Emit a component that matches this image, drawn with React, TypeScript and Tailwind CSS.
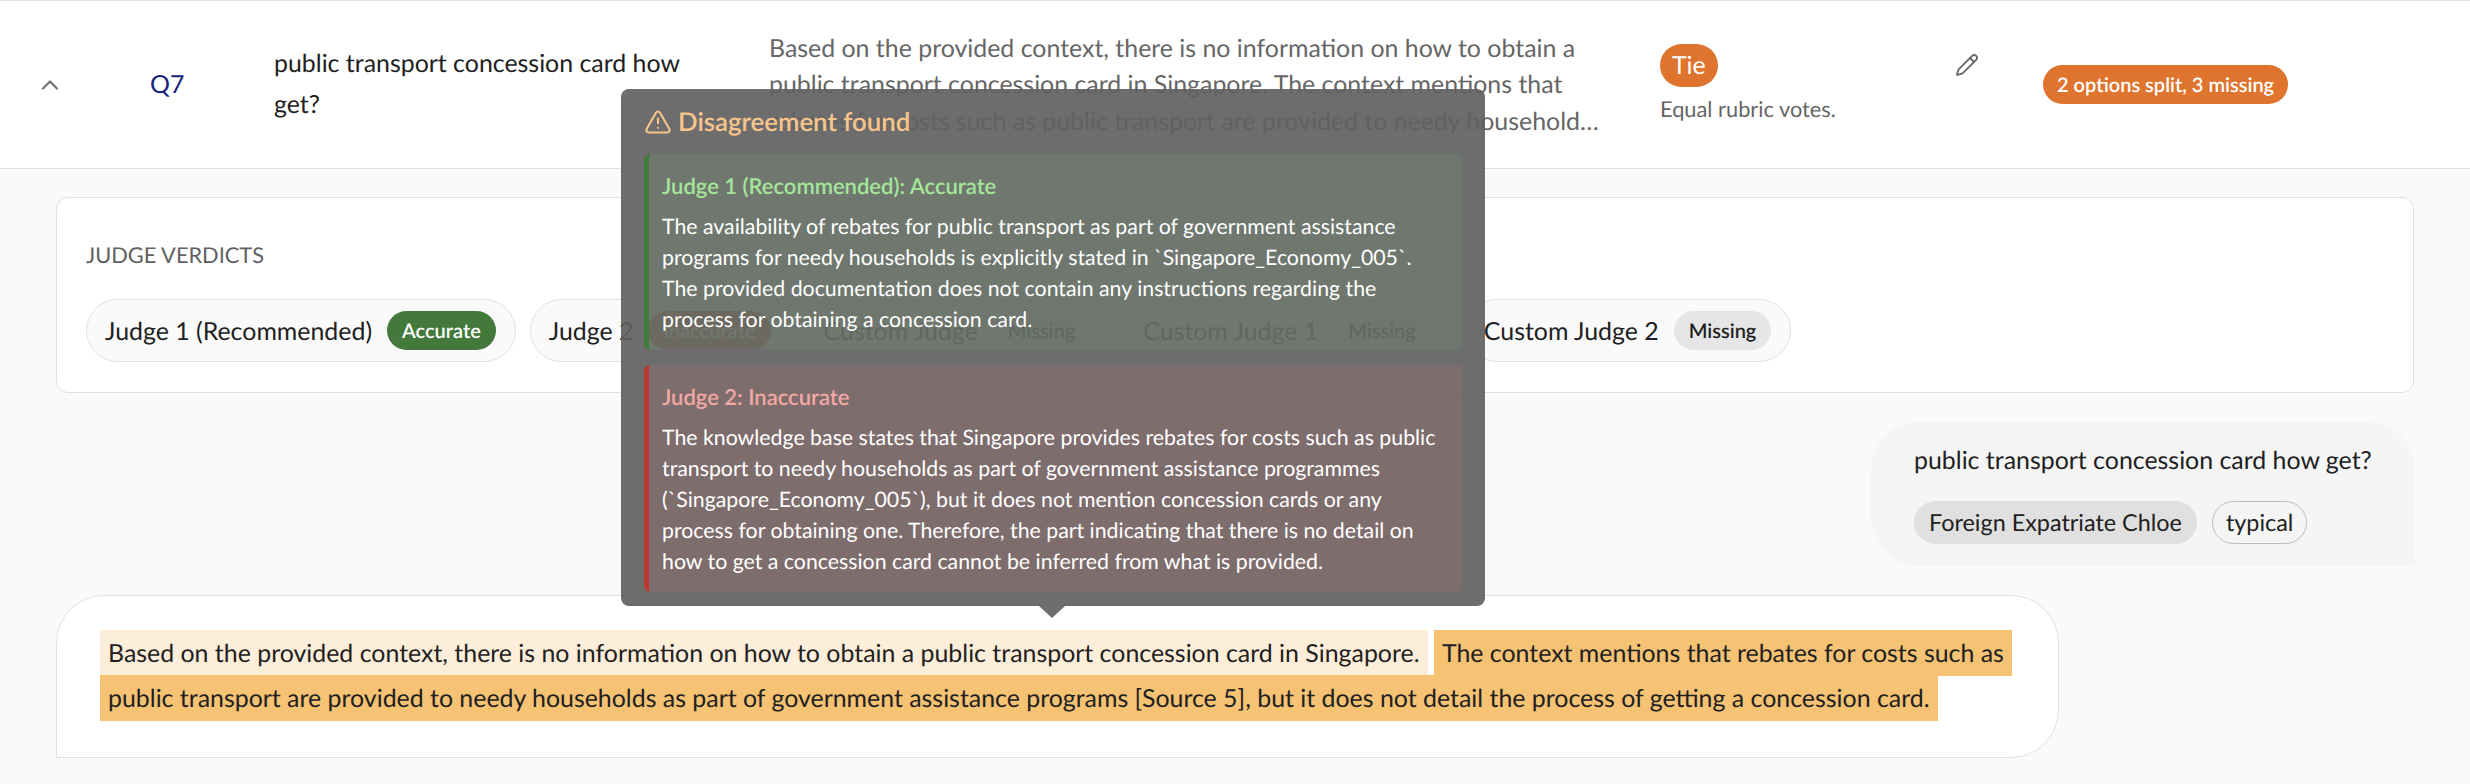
import { ChevronUp, Pencil, TriangleAlert } from 'lucide-react'

const judges = [
  { name: 'Judge 1 (Recommended)', verdict: 'Accurate', badge: 'bg-[#437a3c] text-white' },
  { name: 'Judge 2', verdict: 'Inaccurate', badge: 'bg-[#c0392b] text-white' },
  { name: 'Custom Judge', verdict: 'Missing', badge: 'bg-[#e6e6e6] text-[#1f1f1f]' },
  { name: 'Custom Judge 1', verdict: 'Missing', badge: 'bg-[#e6e6e6] text-[#1f1f1f]' },
  { name: 'Custom Judge 2', verdict: 'Missing', badge: 'bg-[#e6e6e6] text-[#1f1f1f]' },
]

export default function App() {
  return (
    <div className="relative w-[2470px] h-[784px] overflow-hidden bg-[#fafafa] font-['Lato',sans-serif] text-[24.9px] text-[#212121] [text-rendering:geometricPrecision]">
      {/* Summary row */}
      <div className="grid grid-cols-[100px_174px_495px_891px_383px_1fr] items-center h-[169px] bg-white border-y border-[#e0e0e0]">
        <div className="flex justify-center text-[#757575]">
          <ChevronUp className="w-[28px] h-[28px]" strokeWidth={2} />
        </div>
        <div className="pl-[50px] text-[#1a237e]">Q7</div>
        <div className="pr-[50px] leading-[41px] mt-[-2px]">public transport concession card how get?</div>
        <div className="pr-[55px] leading-[36.5px] text-[#666666] line-clamp-3">
          Based on the provided context, there is no information on how to obtain a public transport concession card in
          Singapore. The context mentions that rebates for costs such as public transport are provided to needy
          households as part of government assistance programs
        </div>
        <div className="flex items-start justify-between pr-[64px] mt-[-2px]">
          <div>
            <span className="inline-flex items-center h-[43px] px-[12px] rounded-full bg-[#df742e] text-white">Tie</span>
            <p className="mt-[8px] text-[21.8px] leading-[28px] text-[#666666]">Equal rubric votes.</p>
          </div>
          <Pencil className="mt-[9px] w-[24px] h-[24px] text-[#666666]" strokeWidth={1.8} />
        </div>
        <div>
          <span className="inline-flex items-center h-[39px] px-[14px] rounded-full bg-[#df742e] text-white text-[20px] font-semibold">
            2 options split, 3 missing
          </span>
        </div>
      </div>

      {/* Expanded detail */}
      <div className="flex flex-col gap-[29px] px-[56px] pt-[28px]">
        <div className="h-[196px] px-[29px] pt-[42px] bg-white border border-[#e0e0e0] rounded-[12px]">
          <h3 className="text-[21.8px] leading-[30px] text-[#616161]">JUDGE VERDICTS</h3>
          <div className="flex gap-[14px] mt-[29px]">
            {judges.map((judge) => (
              <div
                key={judge.name}
                className="flex items-center gap-[15px] h-[63px] pl-[18px] pr-[19px] bg-[#fafafa] border border-[#e0e0e0] rounded-full"
              >
                <span className="pt-[2px]">{judge.name}</span>
                <span className={`inline-flex items-center h-[39px] px-[15px] rounded-full text-[20px] font-semibold ${judge.badge}`}>
                  {judge.verdict}
                </span>
              </div>
            ))}
          </div>
        </div>

        <div className="self-end w-[544px] h-[144px] pl-[43px] pt-[20px] mr-[-1px] bg-[#f5f5f5] rounded-[48px] rounded-br-none">
          <p className="leading-[36px]">public transport concession card how get?</p>
          <div className="flex gap-[15px] mt-[23px] text-[23.4px]">
            <span className="inline-flex items-center h-[43px] px-[15px] rounded-full bg-[#e0e0e0]">Foreign Expatriate Chloe</span>
            <span className="inline-flex items-center h-[43px] px-[13px] rounded-full border border-[#bdbdbd]">typical</span>
          </div>
        </div>

        <div className="w-[2003px] h-[163px] px-[43px] py-[35px] bg-white border border-[#e0e0e0] rounded-[48px] rounded-bl-none">
          <p className="leading-[45px] text-[#212121]">
            <span className="py-[8px] px-[8px] bg-[#fdeeda] [box-decoration-break:clone]">
              Based on the provided context, there is no information on how to obtain a public transport concession card in Singapore.
            </span>{' '}
            <span className="py-[8px] px-[8px] bg-[#f6c273] [box-decoration-break:clone]">
              The context mentions that rebates for costs such as public transport are provided to needy households as part of government assistance programs [Source 5], but it does not detail the process of getting a concession card.
            </span>
          </p>
        </div>
      </div>

      {/* Disagreement tooltip */}
      <div className="absolute left-[621px] top-[89px] w-[864px] h-[517px] px-[23px] pt-[15px] bg-[rgba(97,97,97,0.92)] rounded-[8px] text-white">
        <div className="flex items-center gap-[6px] h-[36px] text-[25.8px] text-[#f7c58b] font-semibold">
          <TriangleAlert className="w-[28px] h-[28px] shrink-0" strokeWidth={1.8} />
          <span>Disagreement found</span>
        </div>
        <div className="flex flex-col gap-[15px] mt-[14px]">
          <div className="h-[196px] pl-[13px] pr-[14px] pt-[17px] bg-[rgba(129,199,132,0.12)] border-l-[5px] border-[#3f7d3a] rounded-[6px]">
            <h4 className="text-[22px] leading-[30px] font-semibold text-[#a5e59a]">Judge 1 (Recommended): Accurate</h4>
            <p className="mt-[10px] text-[21.3px] leading-[31px]">
              The availability of rebates for public transport as part of government assistance programs for needy households is explicitly stated in `Singapore_Economy_005`. The provided documentation does not contain any instructions regarding the process for obtaining a concession card.
            </p>
          </div>
          <div className="h-[227px] pl-[13px] pr-[14px] pt-[17px] bg-[rgba(229,115,115,0.15)] border-l-[5px] border-[#b93a32] rounded-[6px]">
            <h4 className="text-[22px] leading-[30px] font-semibold text-[#f2a8a4]">Judge 2: Inaccurate</h4>
            <p className="mt-[10px] text-[21.3px] leading-[31px]">
              The knowledge base states that Singapore provides rebates for costs such as public transport to needy households as part of government assistance programmes (`Singapore_Economy_005`), but it does not mention concession cards or any process for obtaining one. Therefore, the part indicating that there is no detail on how to get a concession card cannot be inferred from what is provided.
            </p>
          </div>
        </div>
        {/* Arrow */}
        <div className="absolute left-[418px] top-full w-0 h-0 border-x-[13px] border-x-transparent border-t-[12px] border-t-[rgba(97,97,97,0.92)]" />
      </div>
    </div>
  )
}
